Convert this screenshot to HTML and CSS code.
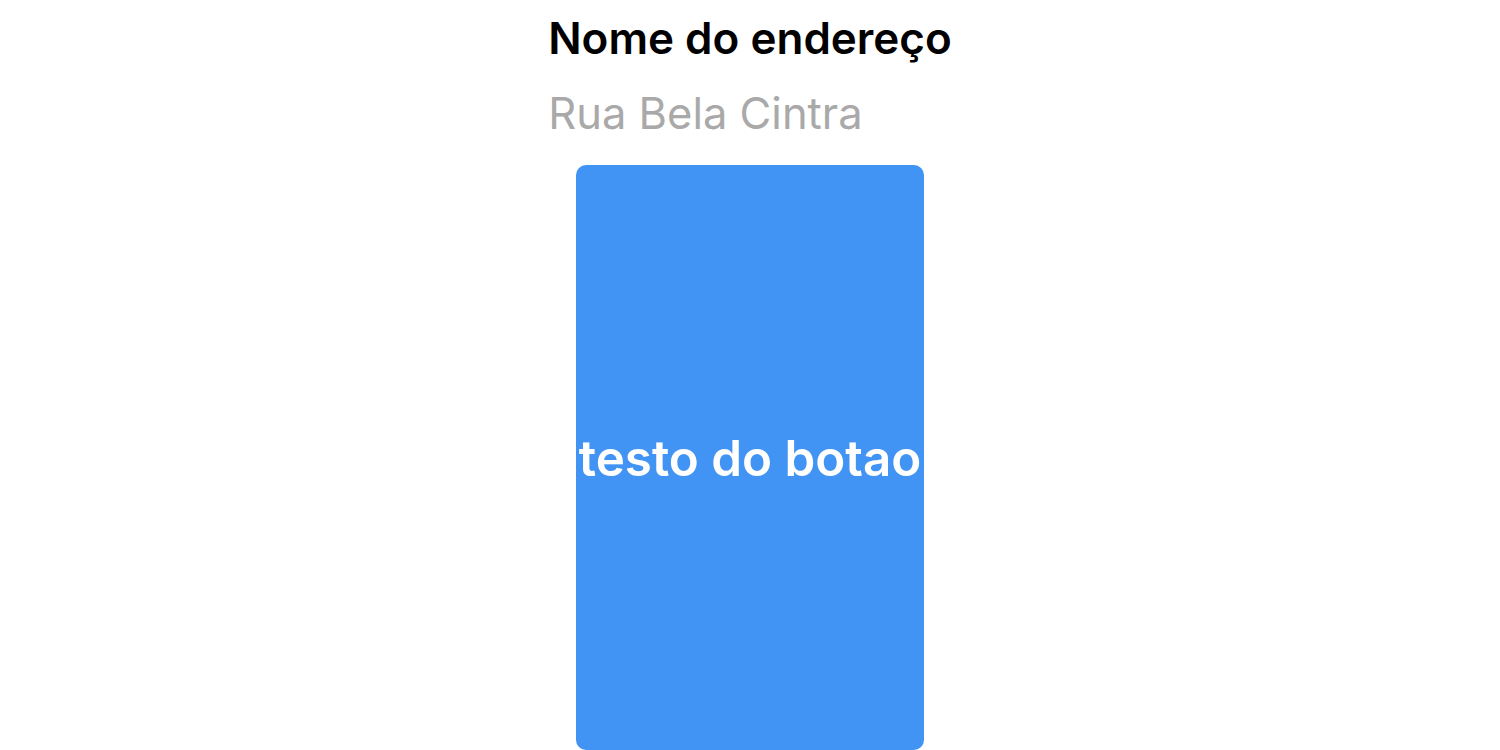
FILE: index.html
```html
<!DOCTYPE html>
<html lang="pt">
<head>
<meta charset="utf-8">
<title>Endereço</title>
<link rel="stylesheet" href="styles.css">
</head>
<body>
<main class="page">
  <div class="header">
    <h1 class="title">Nome do endereço</h1>
    <p class="subtitle">Rua Bela Cintra</p>
  </div>
  <button class="action" type="button">testo do botao</button>
</main>
</body>
</html>
```
FILE: styles.css
```css
html, body {
  margin: 0;
  padding: 0;
  background: #ffffff;
}
body {
  font-family: Inter, "Noto Sans", sans-serif;
  width: 1500px;
  height: 750px;
  overflow: hidden;
}
.page {
  display: flex;
  flex-direction: column;
  align-items: center;
}
.header {
  display: flex;
  flex-direction: column;
  align-items: flex-start;
}
.title {
  margin: 14px 0 0;
  font-size: 44px;
  line-height: 48px;
  font-weight: 600;
  color: #000000;
  letter-spacing: 0;
}
.subtitle {
  margin: 28px 0 0;
  font-size: 43.5px;
  line-height: 46px;
  font-weight: 400;
  color: #a9a9a9;
  letter-spacing: 0;
}
.action {
  margin-top: 29px;
  width: 348px;
  height: 585px;
  border: none;
  border-radius: 10px;
  background: #4294f4;
  color: #ffffff;
  font-family: Inter, "Noto Sans", sans-serif;
  font-size: 49.3px;
  font-weight: 600;
  letter-spacing: 0;
  padding: 0;
  white-space: nowrap;
  display: flex;
  align-items: center;
  justify-content: center;
  overflow: hidden;
}
```
